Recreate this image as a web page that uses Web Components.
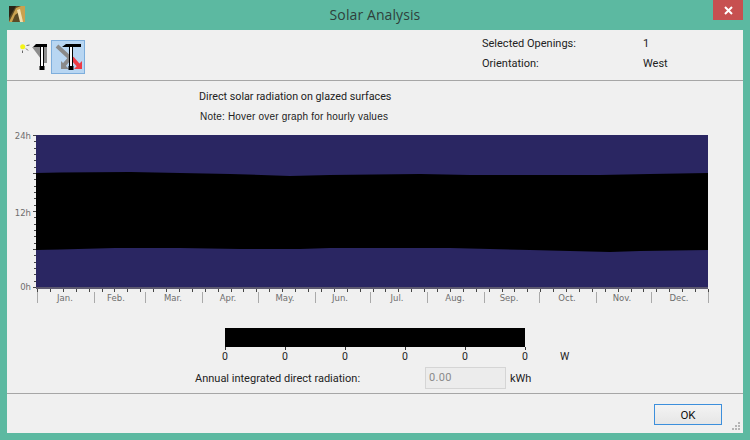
<!DOCTYPE html>
<html>
<head>
<meta charset="utf-8">
<title>Solar Analysis</title>
<style>
  html, body { margin: 0; padding: 0; }
  body { width: 750px; height: 440px; overflow: hidden; font-family: Roboto, "Liberation Sans", sans-serif; }
</style>
</head>
<body>
<solar-window heading="Solar Analysis">
  <solar-toolbar></solar-toolbar>
  <solar-chart></solar-chart>
  <solar-legend></solar-legend>
  <solar-footer></solar-footer>
</solar-window>

<script>
const windowTemplate = document.createElement('template');
windowTemplate.innerHTML = `
  <style>
    :host {
      display: flex;
      flex-direction: column;
      width: 750px;
      height: 440px;
      background: #5cb9a1;
      color: #1a1a1a;
    }
    .titlebar {
      display: grid;
      grid-template-columns: 1fr auto 1fr;
      height: 30px;
      flex: none;
    }
    .app-icon { margin: 6px 0 0 9px; width: 16px; height: 16px; display: block; }
    h1 {
      margin: 0;
      font: 400 14px/29px "Open Sans", sans-serif;
      letter-spacing: .1px;
      color: #2f403b;
    }
    .controls { display: flex; justify-content: flex-end; padding-right: 7px; }
    .close {
      width: 30px;
      height: 20px;
      background: #c75050;
      display: flex;
      align-items: center;
      justify-content: center;
    }
    .body {
      flex: 1;
      margin: 0 7px 7px;
      background: #f0f0f0;
      display: flex;
      flex-direction: column;
    }
  </style>
  <div class="titlebar">
    <svg class="app-icon" viewBox="0 0 16 16">
      <rect width="16" height="16" fill="#5a4a25"/>
      <path d="M0 16 L7 2 L12 0 L16 0 L16 16 L13 16 L10 6 L6 9 L3 16Z" fill="#c9a14f"/>
      <path d="M8 4 L11 3 L14 16 L11 16Z" fill="#f1dfb0"/>
      <path d="M0 0H7L0 12Z" fill="#2a2415"/>
    </svg>
    <h1 id="title"></h1>
    <div class="controls">
      <div class="close">
        <svg width="9" height="9" viewBox="0 0 9 9"><path d="M1 1L8 8M8 1L1 8" stroke="#fff" stroke-width="2"/></svg>
      </div>
    </div>
  </div>
  <div class="body"><slot></slot></div>
`;

class SolarWindow extends HTMLElement {
  constructor() {
    super();
    this.attachShadow({ mode: 'open' });
    this.shadowRoot.appendChild(windowTemplate.content.cloneNode(true));
  }

  connectedCallback() {
    this.shadowRoot.getElementById('title').textContent = this.getAttribute('heading');
  }
}

const toolbarTemplate = document.createElement('template');
toolbarTemplate.innerHTML = `
  <style>
    :host {
      display: flex;
      height: 51px;
      border-bottom: 1px solid #a6a6a6;
      box-sizing: border-box;
      font: 11px Roboto, sans-serif;
      color: #222;
      flex: none;
    }
    .tools { display: flex; align-items: flex-start; gap: 2px; padding: 10px 0 0 12px; }
    .tool { display: block; box-sizing: border-box; }
    .tool.plain { width: 30px; height: 34px; }
    .tool.active {
      width: 34px;
      height: 34px;
      background: #b8d6f2;
      border: 1px solid #7eaedc;
    }
    .info {
      margin-left: auto;
      display: grid;
      grid-template-columns: 161px 100px;
      grid-auto-rows: 20px;
      padding-top: 4px;
      line-height: 20px;
    }
  </style>
  <div class="tools">
    <svg class="tool plain" viewBox="0 0 30 34">
      <path d="M13 7H28V23H25Z" fill="#8d8d8d"/>
      <path d="M17 4H28V7H25V26H24V7H22V26H21V7H14Z" fill="#000"/>
      <rect x="22" y="7" width="2" height="19" fill="#fff"/>
      <rect x="20.5" y="26" width="5" height="4" fill="#000"/>
      <circle cx="3.7" cy="6.7" r="2.5" fill="#f4f418"/>
      <path d="M7.5 5.5L10.5 5M7 8.5L9 10.5M3.5 10.5V13" stroke="#444" stroke-width=".8"/>
    </svg>
    <svg class="tool active" viewBox="1 1 32 32">
      <path d="M6 6L19 18L13 25" fill="none" stroke="#8a8a8a" stroke-width="4"/>
      <path d="M10 21V29H18Z" fill="#8a8a8a"/>
      <path d="M21 18L28 26" fill="none" stroke="#ee3b45" stroke-width="4"/>
      <path d="M31 21V29H23Z" fill="#ee3b45"/>
      <path d="M15 4H30V7H22V26H21V7H19V26H18V7H11Z" fill="#000"/>
      <rect x="19" y="7" width="2" height="19" fill="#fff"/>
      <rect x="17.5" y="26" width="5" height="4" fill="#000"/>
    </svg>
  </div>
  <div class="info">
    <span>Selected Openings:</span><span>1</span>
    <span>Orientation:</span><span>West</span>
  </div>
`;

class SolarToolbar extends HTMLElement {
  constructor() {
    super();
    this.attachShadow({ mode: 'open' });
    this.shadowRoot.appendChild(toolbarTemplate.content.cloneNode(true));
  }
}

const chartTemplate = document.createElement('template');
chartTemplate.innerHTML = `
  <style>
    :host {
      display: flex;
      flex-direction: column;
      flex: none;
      height: 232px;
    }
    .head { height: 48px; padding: 0 0 0 192px; flex: none; }
    .head div { height: 20px; line-height: 20px; }
    .heading { padding-top: 6px; font: 10.75px/20px Roboto, sans-serif; color: #222; }
    .note { font: 10px/20px "Liberation Sans", sans-serif; letter-spacing: .2px; color: #222; padding-left: 1px; }
    svg { display: block; flex: none; }
    text { font: 8.5px "DejaVu Sans", sans-serif; fill: #6e6e6e; }
  </style>
  <div class="head">
    <div class="heading">Direct solar radiation on glazed surfaces</div>
    <div class="note">Note: Hover over graph for hourly values</div>
  </div>
  <svg id="plot" width="736" height="184" viewBox="7 129 736 184"></svg>
`;

const MONTHS = [
  ['Jan.', 31, 65], ['Feb.', 28, 116], ['Mar.', 31, 173], ['Apr.', 30, 228], ['May.', 31, 285], ['Jun.', 30, 340],
  ['Jul.', 31, 397], ['Aug.', 31, 455], ['Sep.', 30, 509], ['Oct.', 31, 567], ['Nov.', 30, 622], ['Dec.', 31, 679]
];

// sunset and sunrise edges, read off the reference
const TOP_EDGE = [[36, 173], [60, 172.5], [130, 172], [180, 173], [230, 174], [290, 176], [330, 175], [420, 174], [470, 175], [600, 175], [650, 174], [708, 173]];
const LOW_EDGE = [[36, 250], [60, 249.5], [115, 248], [180, 248], [240, 249], [300, 249], [330, 248], [450, 248], [530, 250], [610, 252], [640, 251], [708, 250]];

class SolarChart extends HTMLElement {
  constructor() {
    super();
    this.attachShadow({ mode: 'open' });
    this.shadowRoot.appendChild(chartTemplate.content.cloneNode(true));
  }

  connectedCallback() {
    const left = 36, right = 708, top = 135, bottom = 287;
    const pts = (list) => list.map((p) => p.join(',')).join(' ');
    let out = `<rect x="${left}" y="${top}" width="${right - left}" height="${bottom - top}" fill="#2a2662"/>`;
    out += `<polygon fill="#000" points="${pts(TOP_EDGE)} ${pts(LOW_EDGE.slice().reverse())}"/>`;
    out += `<rect x="${left}" y="${bottom}" width="${right - left}" height="2" fill="#5e5a70"/>`;

    for (let h = 0; h <= 24; h++) {
      const y = Math.round(bottom - h * (bottom - top) / 24);
      const major = h % 6 === 0;
      out += `<rect x="${major ? 33 : 34}" y="${y}" width="${major ? 3 : 2}" height="1" fill="#444"/>`;
    }
    [['24h', 139], ['12h', 216], ['0h', 290]].forEach(([label, y]) => {
      out += `<text x="31" y="${y}" text-anchor="end">${label}</text>`;
    });

    for (let w = 0; w <= 52; w++) {
      const x = Math.round(37 + w * 671 / 52);
      out += `<rect x="${x}" y="289" width="1" height="3" fill="#444"/>`;
    }
    let day = 0;
    const scale = 671 / 365;
    out += `<rect x="37" y="292" width="1" height="11" fill="#aaa"/>`;
    MONTHS.forEach(([name, days, mid]) => {
      day += days;
      const x = Math.round(37 + day * scale);
      out += `<rect x="${x}" y="292" width="1" height="11" fill="#aaa"/>`;
      out += `<text x="${mid}" y="301" text-anchor="middle">${name}</text>`;
    });
    this.shadowRoot.getElementById('plot').innerHTML = out;
  }
}

const legendTemplate = document.createElement('template');
legendTemplate.innerHTML = `
  <style>
    :host {
      display: block;
      flex: none;
      height: 81px;
      border-bottom: 1px solid #a6a6a6;
      box-sizing: border-box;
      font: 11px Roboto, sans-serif;
      color: #222;
    }
    .bar { margin: 15px 0 0 218px; width: 300px; height: 19px; background: #000; }
    .scale {
      position: relative;
      display: flex;
      justify-content: space-between;
      margin-left: 218px;
      width: 301px;
      height: 20px;
    }
    .scale div { width: 1px; height: 3px; background: #333; position: relative; }
    .scale span { position: absolute; top: 2px; left: -3px; line-height: 15px; font-size: 10.5px; }
    .unit { position: absolute; left: 335px; top: 2px; line-height: 15px; font-size: 10.5px; font-weight: 400; }
    .row { display: flex; align-items: center; height: 22px; padding-left: 188px; }
    .row label { width: 230px; }
    .field {
      width: 76px;
      height: 20px;
      border: 1px solid #d5d5d5;
      background: #ececec;
      color: #8a8a8a;
      line-height: 20px;
      padding-left: 3px;
      letter-spacing: .3px;
    }
    .kwh { margin-left: 4px; }
  </style>
  <div class="bar"></div>
  <div class="scale">
    <div><span>0</span></div><div><span>0</span></div><div><span>0</span></div>
    <div><span>0</span></div><div><span>0</span></div><div><span>0</span></div>
    <b class="unit">W</b>
  </div>
  <div class="row">
    <label>Annual integrated direct radiation:</label>
    <div class="field">0.00</div>
    <span class="kwh">kWh</span>
  </div>
`;

class SolarLegend extends HTMLElement {
  constructor() {
    super();
    this.attachShadow({ mode: 'open' });
    this.shadowRoot.appendChild(legendTemplate.content.cloneNode(true));
  }
}

const footerTemplate = document.createElement('template');
footerTemplate.innerHTML = `
  <style>
    :host {
      display: flex;
      flex: 1;
      justify-content: flex-end;
      align-items: flex-start;
      padding: 10px 21px 0 0;
      position: relative;
    }
    button {
      width: 68px;
      height: 21px;
      padding: 0;
      border: 1px solid #3c8fdc;
      background: linear-gradient(#f3f3f3, #e6e6e6);
      font: 11.5px Roboto, sans-serif;
      color: #111;
    }
    .grip { position: absolute; right: 2px; bottom: 2px; }
  </style>
  <button>OK</button>
  <svg class="grip" width="9" height="9" viewBox="0 0 9 9" fill="#b5b5b5">
    <rect x="6" y="0" width="2" height="2"/>
    <rect x="3" y="3" width="2" height="2"/><rect x="6" y="3" width="2" height="2"/>
    <rect x="0" y="6" width="2" height="2"/><rect x="3" y="6" width="2" height="2"/><rect x="6" y="6" width="2" height="2"/>
  </svg>
`;

class SolarFooter extends HTMLElement {
  constructor() {
    super();
    this.attachShadow({ mode: 'open' });
    this.shadowRoot.appendChild(footerTemplate.content.cloneNode(true));
  }
}

customElements.define('solar-window', SolarWindow);
customElements.define('solar-toolbar', SolarToolbar);
customElements.define('solar-chart', SolarChart);
customElements.define('solar-legend', SolarLegend);
customElements.define('solar-footer', SolarFooter);
</script>
</body>
</html>
